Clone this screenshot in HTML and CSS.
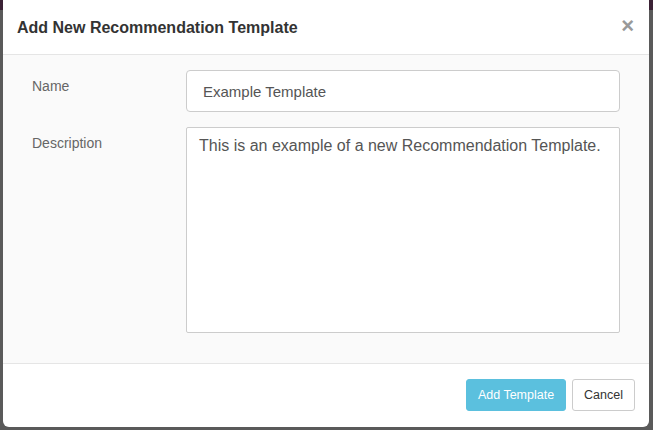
FILE: index.html
```html
<!DOCTYPE html>
<html>
<head>
<meta charset="utf-8">
<link rel="stylesheet" href="styles.css">
</head>
<body>
<div class="backdrop">
  <div class="modal">
    <div class="modal-header">
      <h4 class="modal-title">Add New Recommendation Template</h4>
      <span class="close">&times;</span>
    </div>
    <div class="modal-body">
      <div class="form-row">
        <label class="form-label">Name</label>
        <input class="form-input" type="text" value="Example Template">
      </div>
      <div class="form-row">
        <label class="form-label">Description</label>
        <textarea class="form-textarea">This is an example of a new Recommendation Template.</textarea>
      </div>
    </div>
    <div class="modal-footer">
      <button class="btn btn-info">Add Template</button>
      <button class="btn btn-default">Cancel</button>
    </div>
  </div>
</div>
</body>
</html>
```
FILE: styles.css
```css
html, body {
  margin: 0;
  padding: 0;
  height: 100%;
}
body {
  background: #5a5a5a;
  font-family: "Liberation Sans", Arial, Helvetica, sans-serif;
  overflow: hidden;
}
.backdrop {
  height: 430px;
  padding: 0 4px 3px 3px;
  box-sizing: border-box;
  background: linear-gradient(#3b2235 0, #3b2235 10px, #5a5a5a 10px);
  display: flex;
}
.modal {
  flex: 1;
  background: #fff;
  border-radius: 0 0 6px 6px;
  display: flex;
  flex-direction: column;
  overflow: hidden;
}
.modal-header {
  height: 55px;
  border-bottom: 1px solid #e5e5e5;
  display: flex;
  align-items: center;
  justify-content: space-between;
  padding: 0 15px 0 14px;
  box-sizing: border-box;
  flex-shrink: 0;
}
.modal-title {
  margin: 0;
  font-size: 16px;
  font-weight: bold;
  color: #333;
  padding-top: 1px;
}
.close {
  font-size: 22px;
  font-weight: bold;
  color: #999;
  line-height: 1;
  margin-top: -2px;
}
.modal-body {
  flex: 1;
  background: #fafafa;
  border-bottom: 1px solid #e5e5e5;
  padding: 15px 29px 0 29px;
  display: flex;
  flex-direction: column;
  gap: 15px;
}
.form-row {
  display: flex;
  align-items: flex-start;
}
.form-label {
  width: 154px;
  flex-shrink: 0;
  font-size: 14px;
  color: #666;
  padding-top: 8px;
}
.form-input {
  width: 434px;
  height: 42px;
  box-sizing: border-box;
  border: 1px solid #ccc;
  border-radius: 4px;
  background: #fff;
  padding: 0 16px;
  font-family: "Liberation Sans", Arial, Helvetica, sans-serif;
  font-size: 15px;
  color: #555;
  margin: 0;
  outline: none;
}
.form-textarea {
  width: 434px;
  height: 206px;
  box-sizing: border-box;
  border: 1px solid #ccc;
  border-radius: 2px;
  background: #fff;
  padding: 8px 12px;
  font-family: "Liberation Sans", Arial, Helvetica, sans-serif;
  font-size: 16px;
  line-height: 20px;
  color: #555;
  margin: 0;
  resize: none;
  outline: none;
}
.modal-footer {
  height: 63px;
  flex-shrink: 0;
  display: flex;
  justify-content: flex-end;
  align-items: center;
  gap: 6px;
  padding: 0 14px 2px 0;
  box-sizing: border-box;
}
.btn {
  height: 32px;
  border-radius: 3px;
  font-family: "Liberation Sans", Arial, Helvetica, sans-serif;
  font-size: 12.5px;
  padding: 0 10px;
  margin: 0;
  cursor: pointer;
}
.btn-info {
  width: 100px;
  background: #5bc0de;
  border: 1px solid #5bc0de;
  color: #fff;
}
.btn-default {
  width: 63px;
  background: #fff;
  border: 1px solid #ccc;
  color: #333;
}
```
